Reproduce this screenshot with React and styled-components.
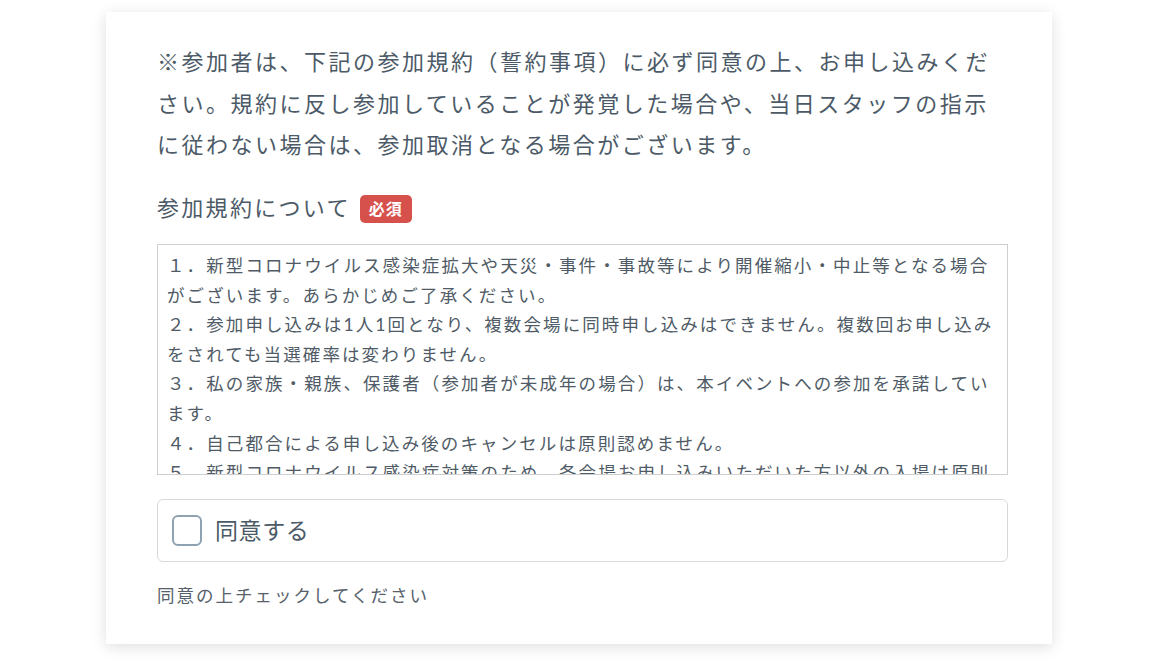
import React, { useState } from "react";
import styled, { createGlobalStyle } from "styled-components";

const GlobalStyle = createGlobalStyle`
  html, body {
    margin: 0;
    padding: 0;
    background: #fff;
  }
  body {
    font-family: "Lato", "Noto Sans CJK JP", sans-serif;
    color: #4c5a67;
  }
`;

const Page = styled.div`
  width: 1158px;
  height: 672px;
  display: flex;
  justify-content: center;
  padding-top: 12px;
  box-sizing: border-box;
`;

const Card = styled.section`
  width: 946px;
  height: 632px;
  box-sizing: border-box;
  padding: 29px 44px 0 51px;
  background: #fff;
  box-shadow: 0 3px 14px rgba(0, 0, 0, 0.13);
  display: flex;
  flex-direction: column;
`;

const Intro = styled.p`
  margin: 0;
  font-size: 22px;
  line-height: 41.5px;
  letter-spacing: 2.5px;
`;

const LabelRow = styled.div`
  margin-top: 21px;
  display: flex;
  align-items: center;
  gap: 9px;
  font-size: 22px;
  line-height: 41.5px;
  letter-spacing: 2.3px;
`;

const Badge = styled.span`
  display: inline-flex;
  align-items: center;
  justify-content: center;
  width: 52px;
  height: 28px;
  margin-top: 3px;
  border-radius: 5px;
  background: #d6504c;
  color: #fff;
  font-size: 16px;
  font-weight: 700;
  letter-spacing: 1px;
  line-height: 1;
`;

const TermsBox = styled.div`
  margin-top: 16px;
  height: 231px;
  box-sizing: border-box;
  border: 1px solid #cfcfcf;
  padding: 6px 8px 0 9px;
  overflow-y: scroll;
  scrollbar-width: none;
  font-size: 17.5px;
  line-height: 29.6px;
  letter-spacing: 2.1px;
  color: #4f5b66;
`;

const Term = styled.div``;

const AgreeBox = styled.label`
  margin-top: 24px;
  height: 63px;
  box-sizing: border-box;
  border: 1.5px solid #d9d9d9;
  border-radius: 6px;
  display: flex;
  align-items: center;
  padding-left: 14px;
  gap: 13px;
  cursor: pointer;
`;

const Check = styled.span`
  width: 30px;
  height: 31px;
  box-sizing: border-box;
  border: 2px solid ${({ checked }) => (checked ? "#3c7cc4" : "#8fa2b1")};
  background: ${({ checked }) => (checked ? "#3c7cc4" : "#fff")};
  border-radius: 6px;
  display: flex;
  align-items: center;
  justify-content: center;
`;

const AgreeText = styled.span`
  font-size: 23px;
  line-height: 31px;
  letter-spacing: 0.6px;
  color: #4c5a67;
`;

const Hint = styled.p`
  margin: 19px 0 0;
  font-size: 17.5px;
  line-height: 29.6px;
  letter-spacing: 2px;
  color: #56616b;
`;

const terms = [
  "１．新型コロナウイルス感染症拡大や天災・事件・事故等により開催縮小・中止等となる場合がございます。あらかじめご了承ください。",
  "２．参加申し込みは1人1回となり、複数会場に同時申し込みはできません。複数回お申し込みをされても当選確率は変わりません。",
  "３．私の家族・親族、保護者（参加者が未成年の場合）は、本イベントへの参加を承諾しています。",
  "４．自己都合による申し込み後のキャンセルは原則認めません。",
  "５．新型コロナウイルス感染症対策のため、各会場お申し込みいただいた方以外の入場は原則お断りいたします。",
  "６．当日は主催者およびスタッフの指示に従ってください。",
];

export default function App() {
  const [agreed, setAgreed] = useState(false);

  return (
    <>
      <GlobalStyle />
      <Page>
        <Card>
          <Intro>
            ※参加者は、下記の参加規約（誓約事項）に必ず同意の上、お申し込みください。規約に反し参加していることが発覚した場合や、当日スタッフの指示に従わない場合は、参加取消となる場合がございます。
          </Intro>
          <LabelRow>
            参加規約について
            <Badge>必須</Badge>
          </LabelRow>
          <TermsBox>
            {terms.map((t) => (
              <Term key={t}>{t}</Term>
            ))}
          </TermsBox>
          <AgreeBox onClick={() => setAgreed(!agreed)}>
            <Check checked={agreed}>
              {agreed && (
                <svg width="18" height="18" viewBox="0 0 24 24" fill="none" stroke="#fff" strokeWidth="3">
                  <path d="M5 12l5 5 9-10" />
                </svg>
              )}
            </Check>
            <AgreeText>同意する</AgreeText>
          </AgreeBox>
          <Hint>同意の上チェックしてください</Hint>
        </Card>
      </Page>
    </>
  );
}
